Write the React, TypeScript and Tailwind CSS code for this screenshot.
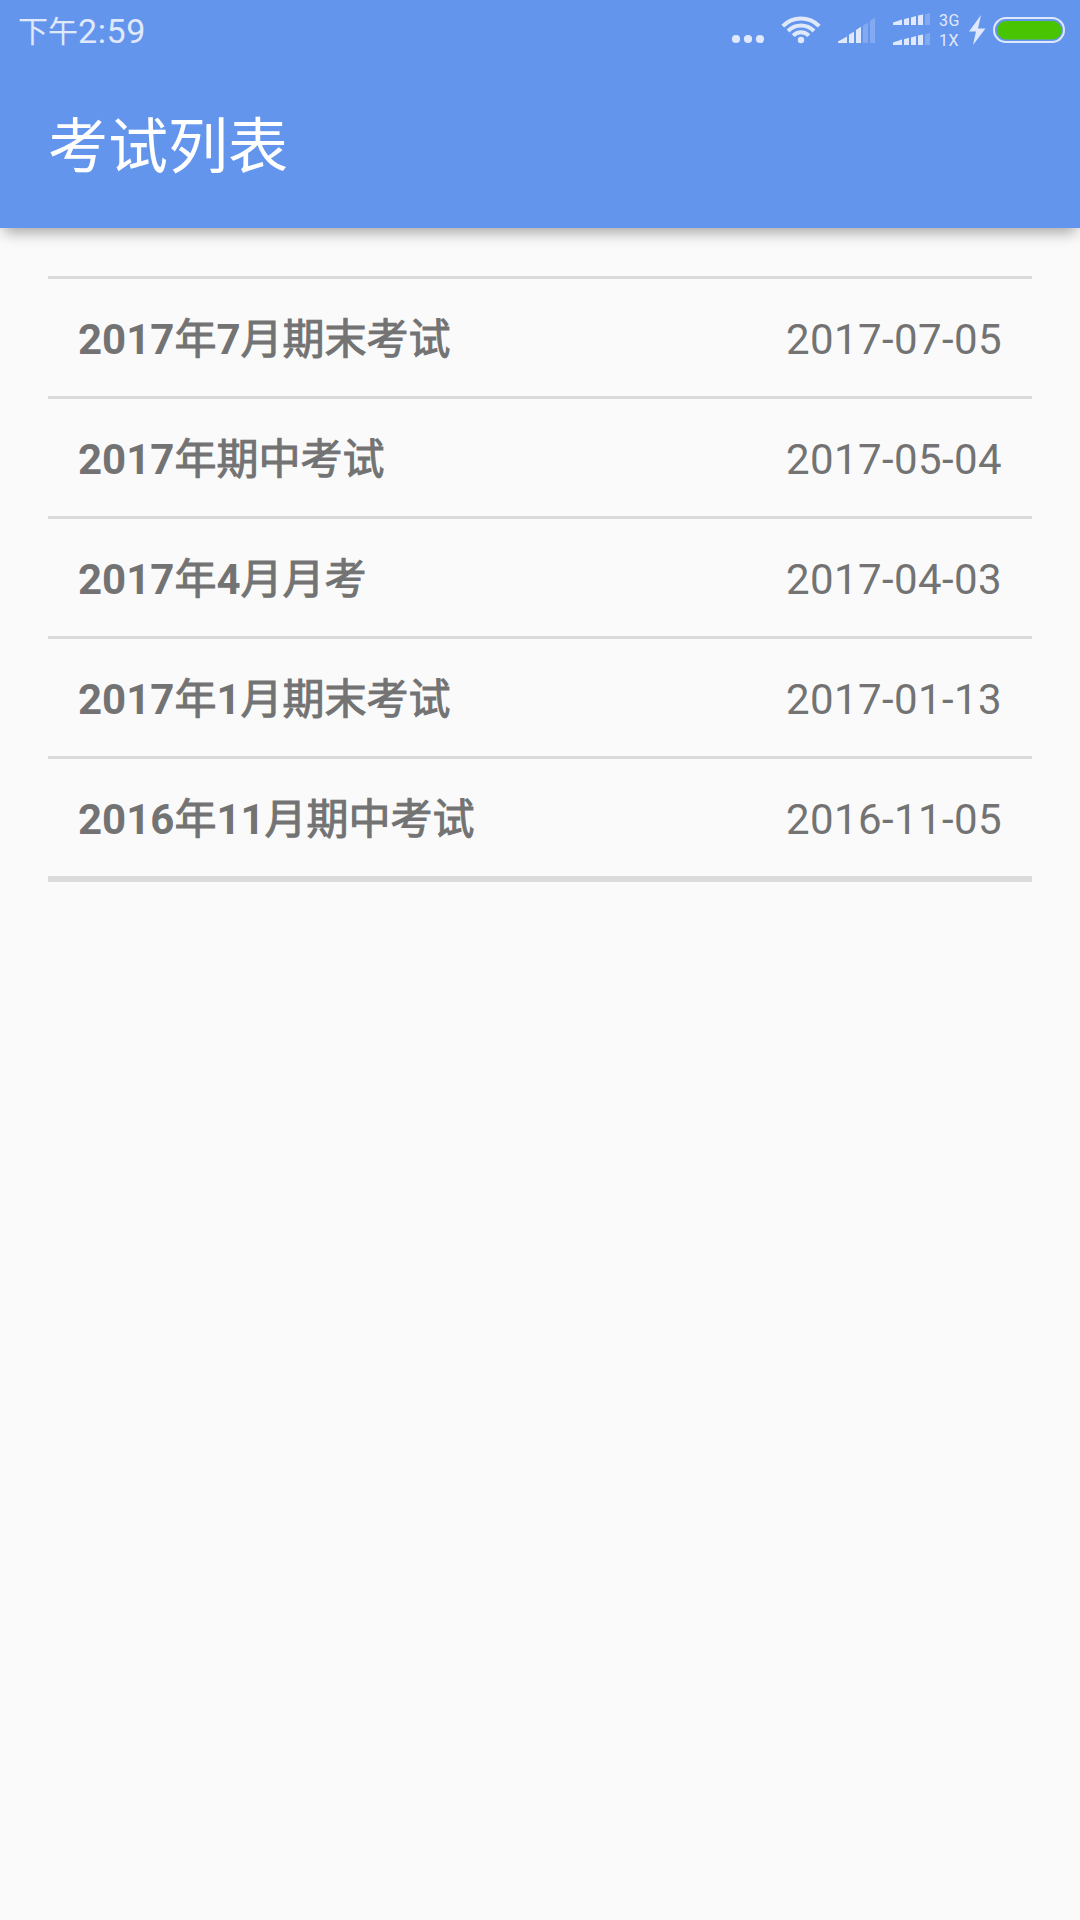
const exams = [
  { name: '2017年7月期末考试', date: '2017-07-05' },
  { name: '2017年期中考试', date: '2017-05-04' },
  { name: '2017年4月月考', date: '2017-04-03' },
  { name: '2017年1月期末考试', date: '2017-01-13' },
  { name: '2016年11月期中考试', date: '2016-11-05' },
];

function SmallSignal() {
  return (
    <svg className="block" width="38" height="12" viewBox="0 0 38 12" fill="#e0e9fb">
      <path d="M0 9.5 9 6.6V12H0z" />
      <path d="M11 6.2 16 4.8V12H11z" />
      <path d="M18 4.4 23 3V12H18z" />
      <path d="M25 2.6 30 1.4V12H25z" />
      <path d="M32 1.2 37 0V12H32z" fill="#83aaf0" />
    </svg>
  );
}

function StatusBar() {
  return (
    <div className="flex h-[60px] items-start pl-[18px] text-[#e0e9fb]">
      <div className="flex h-[60px] items-start">
        <span className="font-['Noto_Sans_CJK_SC',sans-serif] text-[30px] leading-[58px]">下午</span>
        <span className="text-[34px] leading-[62px] tracking-[0.6px]">2:59</span>
      </div>
      <svg className="ml-auto block" width="172" height="60" viewBox="720 0 172 60" fill="#e0e9fb">
        <circle cx="736" cy="39" r="4.1" />
        <circle cx="748" cy="39" r="4.1" />
        <circle cx="760" cy="39" r="4.1" />
        <circle cx="801" cy="40" r="3.2" />
        <g fill="none" stroke="#e0e9fb" strokeWidth="4">
          <path d="M782.8 26.2a25.5 25.5 0 0 1 36.4 0" />
          <path d="M788 31a18.3 18.3 0 0 1 26 0" />
          <path d="M793.2 35.6a11 11 0 0 1 15.6 0" />
        </g>
        <path d="M838 41.5 847 36.5V43H838z" />
        <path d="M849 34.5 854 31.8V43H849z" />
        <path d="M856 30 861 26.7V43H856z" />
        <path d="M863 25.4 868 22.5V43H863z" fill="#83aaf0" />
        <path d="M870 20.8 875 17.7V43H870z" fill="#83aaf0" />
      </svg>
      <div className="ml-px flex h-[60px] flex-col gap-2 pt-[13px]">
        <SmallSignal />
        <SmallSignal />
      </div>
      <div className="ml-2 flex w-[28px] flex-col pt-[11px] text-[16px] leading-5 tracking-[0.5px]">
        <span>3G</span>
        <span>1X</span>
      </div>
      <svg className="block" width="113" height="60" viewBox="967 0 113 60">
        <path d="M981 15 969 31.6H976L973 45 985.5 28.4H978z" fill="#e0e9fb" />
        <rect x="994" y="18" width="70" height="24" rx="12" fill="none" stroke="#e0e9fb" strokeWidth="2" />
        <rect x="997" y="21" width="64.5" height="18.5" rx="9" fill="#48c400" />
      </svg>
    </div>
  );
}

function ExamName({ text }: { text: string }) {
  return (
    <span>
      {text.split(/(\d+)/).map((part, i) =>
        /^\d+$/.test(part) ? (
          <span key={i} className="font-bold">
            {part}
          </span>
        ) : (
          <span key={i} className="[-webkit-text-stroke:1px_#737373]">
            {part}
          </span>
        ),
      )}
    </span>
  );
}

export default function App() {
  return (
    <div className="h-[1920px] w-[1080px] overflow-hidden bg-[#fafafa] font-['Roboto','Noto_Sans_CJK_SC',sans-serif]">
      <header className="h-[228px] bg-[#6495ed] shadow-[0_8px_14px_-4px_rgba(0,0,0,0.36)]">
        <StatusBar />
        <h1 className="flex h-[168px] items-center px-12 pt-2 text-[60px] leading-none font-normal text-white">
          考试列表
        </h1>
      </header>
      <ul className="mx-12 mt-12 border-b-[6px] border-[#dbdbdb]">
        {exams.map((exam) => (
          <li
            key={exam.date}
            className="flex h-[120px] items-center justify-between border-t-[3px] border-[#dbdbdb] px-[30px] pt-1 text-[42px] leading-none text-[#737373]"
          >
            <ExamName text={exam.name} />
            <span className="tracking-[0.4px]">{exam.date}</span>
          </li>
        ))}
      </ul>
    </div>
  );
}
